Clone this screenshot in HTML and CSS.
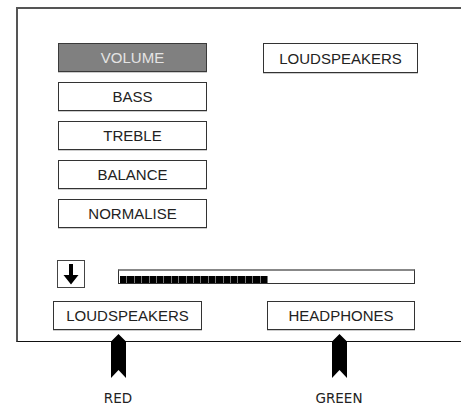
FILE: index.html
```html
<!doctype html>
<html>
  <head>
    <link rel="stylesheet" href="styles.css">
  </head>

  <body>
    <main class="panel">
      <section class="top">
        <div class="menu">
          <div class="btn active">VOLUME</div>
          <div class="btn">BASS</div>
          <div class="btn">TREBLE</div>
          <div class="btn">BALANCE</div>
          <div class="btn">NORMALISE</div>
        </div>
        <div class="btn output">LOUDSPEAKERS</div>
      </section>

      <section class="controls">
        <div class="arrow-box">
          <svg width="16" height="21" viewBox="0 0 16 21">
            <path d="M6 0 H10 V11 H15.5 L8 20.5 L0.5 11 H6 Z" fill="#000" />
          </svg>
        </div>
        <div class="bar">
          <div class="fill" style="width: 148px"></div>
        </div>
      </section>

      <section class="outputs">
        <div class="btn speakers">LOUDSPEAKERS</div>
        <div class="btn phones">HEADPHONES</div>
      </section>
    </main>

    <section class="pointers">
      <div class="pointer">
        <svg width="15" height="44" viewBox="0 0 15 44">
          <path d="M7.5 0 L15 7.5 V44 L7.5 36 L0 44 V7.5 Z" fill="#000" />
        </svg>
        <span class="label">RED</span>
      </div>
      <div class="pointer">
        <svg width="15" height="44" viewBox="0 0 15 44">
          <path d="M7.5 0 L15 7.5 V44 L7.5 36 L0 44 V7.5 Z" fill="#000" />
        </svg>
        <span class="label">GREEN</span>
      </div>
    </section>
  </body>
</html>
```

FILE: styles.css
```css
/* CSS Reset */
*,
*::before,
*::after {
  box-sizing: border-box;
  margin: 0;
  padding: 0;
}

body {
  font-family: "Liberation Sans", Arial, sans-serif;
  font-size: 15px;
  color: #222;
  background-color: #fff;
  overflow: hidden;
}

.panel {
  margin: 7px 0 0 16px;
  height: 335px;
  padding: 34px 0 0 40px;
  border-left: 2px solid #555;
  border-top: 2px solid #555;
  border-bottom: 1px solid #111;
}

.btn {
  display: flex;
  align-items: center;
  justify-content: center;
  height: 29px;
  border: 1px solid #333;
  background-color: #fff;
  box-shadow: 0 1px 0 #ccc;
  line-height: 1;
}

.btn.active {
  background-color: #808080;
  color: #e4e4e4;
  border-color: #3a3a3a;
}

.top {
  display: flex;
  gap: 56px;
}

.menu {
  display: flex;
  flex-direction: column;
  gap: 10px;
  width: 149px;
}

.output {
  width: 155px;
  height: 30px;
}

.controls {
  display: flex;
  align-items: flex-start;
  gap: 33px;
  margin: 32px 0 0 -1px;
}

.arrow-box {
  display: flex;
  align-items: center;
  justify-content: center;
  width: 28px;
  height: 28px;
  border: 1px solid #444;
}

.bar {
  width: 297px;
  height: 15px;
  margin-top: 9px;
  padding: 5px 1px 0;
  border: 1px solid #333;
  border-top: 2px solid #888;
}

.fill {
  height: 7px;
  background: repeating-linear-gradient(
    to right,
    #000 0,
    #000 6.4px,
    #777 6.4px,
    #777 7.4px
  );
}

.outputs {
  display: flex;
  gap: 65px;
  margin: 13px 0 0 -5px;
}

.speakers {
  width: 149px;
}

.phones {
  width: 148px;
}

.pointers {
  display: flex;
  gap: 161px;
  margin-top: -8px;
  padding-left: 88px;
}

.pointer {
  display: flex;
  flex-direction: column;
  align-items: center;
  width: 60px;
}

.pointer svg {
  display: block;
}

.label {
  margin-top: 14px;
  font-family: "DejaVu Sans", Verdana, sans-serif;
  font-size: 13.5px;
  line-height: 13px;
  color: #222;
}
```
